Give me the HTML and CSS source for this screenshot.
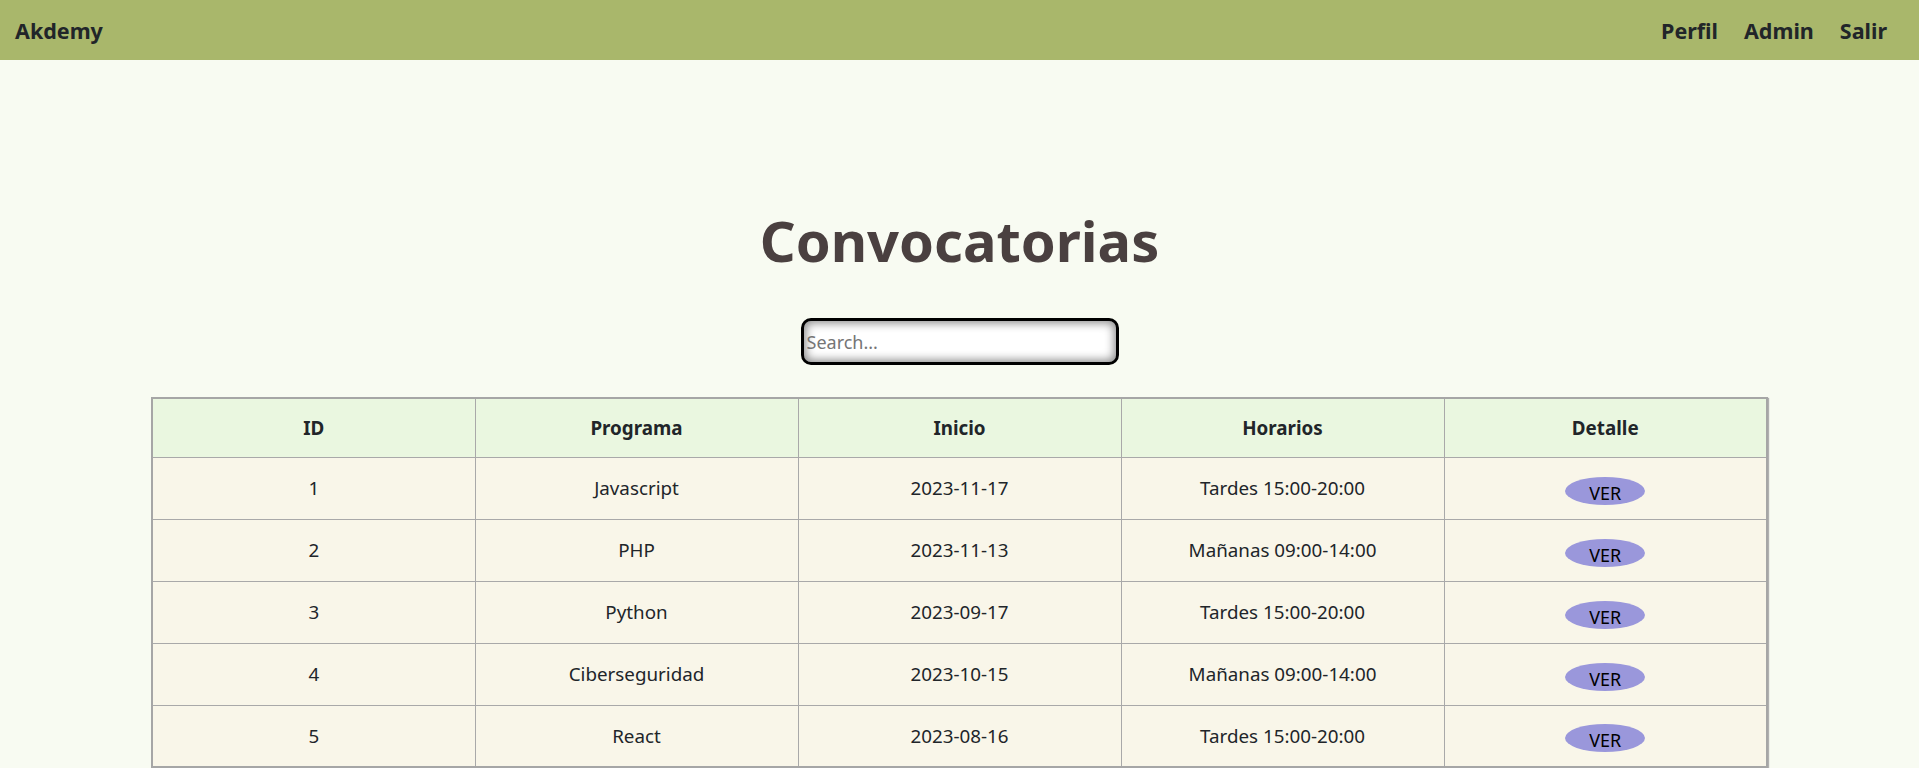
FILE: index.html
```html
<!DOCTYPE html>
<html lang="es">
<head>
<meta charset="utf-8">
<title>Akdemy - Convocatorias</title>
<link rel="stylesheet" href="styles.css">
</head>
<body>
<nav class="navbar">
  <a class="brand" href="#">Akdemy</a>
  <div class="nav-links">
    <a href="#">Perfil</a>
    <a href="#">Admin</a>
    <a href="#">Salir</a>
  </div>
</nav>
<main class="content">
  <h1 class="title">Convocatorias</h1>
  <div class="search-wrap">
    <input class="search" type="text" placeholder="Search...">
  </div>
  <div class="table-wrap">
    <table class="grid">
      <thead>
        <tr><th>ID</th><th>Programa</th><th>Inicio</th><th>Horarios</th><th>Detalle</th></tr>
      </thead>
      <tbody>
        <tr><td>1</td><td>Javascript</td><td>2023-11-17</td><td>Tardes 15:00-20:00</td><td><span class="ver">VER</span></td></tr>
        <tr><td>2</td><td>PHP</td><td>2023-11-13</td><td>Mañanas 09:00-14:00</td><td><span class="ver">VER</span></td></tr>
        <tr><td>3</td><td>Python</td><td>2023-09-17</td><td>Tardes 15:00-20:00</td><td><span class="ver">VER</span></td></tr>
        <tr><td>4</td><td>Ciberseguridad</td><td>2023-10-15</td><td>Mañanas 09:00-14:00</td><td><span class="ver">VER</span></td></tr>
        <tr><td>5</td><td>React</td><td>2023-08-16</td><td>Tardes 15:00-20:00</td><td><span class="ver">VER</span></td></tr>
      </tbody>
    </table>
  </div>
</main>
</body>
</html>
```
FILE: styles.css
```css
* { box-sizing: border-box; }
html, body { margin: 0; padding: 0; }
body {
  background: #f8fbf2;
  font-family: "Noto Sans", "Open Sans", sans-serif;
  color: #212529;
}
.navbar {
  height: 60px;
  background: #a9b76b;
  display: flex;
  align-items: center;
  justify-content: space-between;
  padding: 0 15px;
}
.navbar a {
  color: #212529;
  text-decoration: none;
  font-weight: 700;
  font-size: 21.5px;
}
.nav-links {
  display: flex;
  gap: 26px;
  padding-right: 17px;
}
.content {
  padding-top: 140px;
}
.title {
  margin: 0;
  text-align: center;
  font-size: 56px;
  line-height: 80px;
  font-weight: 700;
  color: #4a4040;
}
.search-wrap {
  display: flex;
  justify-content: center;
  margin-top: 38px;
}
.search {
  width: 318px;
  height: 47px;
  border: 3px solid #000;
  border-radius: 10px;
  background: #fff;
  box-shadow: inset 0 0 10px 2px #8a8a8a;
  font-family: inherit;
  font-size: 18px;
  padding: 0 3px;
  outline: none;
}
.search::placeholder { color: #757575; }
.table-wrap {
  padding: 32px 151px 0;
}
.grid {
  width: 100%;
  border-collapse: collapse;
  table-layout: fixed;
  border: 2px solid #a6a6a6;
  box-shadow: 1px 1px 1px #b0b0b0;
}
.grid th, .grid td {
  border: 1px solid #a9a9a9;
  text-align: center;
  font-size: 18.8px;
}
.grid th {
  background: #eaf7e0;
  font-weight: 700;
  height: 59px;
}
.grid td {
  background: #f9f6e9;
  height: 62px;
  font-weight: 400;
}
.ver {
  display: inline-block;
  width: 80px;
  height: 28px;
  line-height: 32px;
  border-radius: 50%;
  background: #9a97db;
  color: #000;
  font-size: 18px;
  position: relative;
  top: 3px;
}
```
